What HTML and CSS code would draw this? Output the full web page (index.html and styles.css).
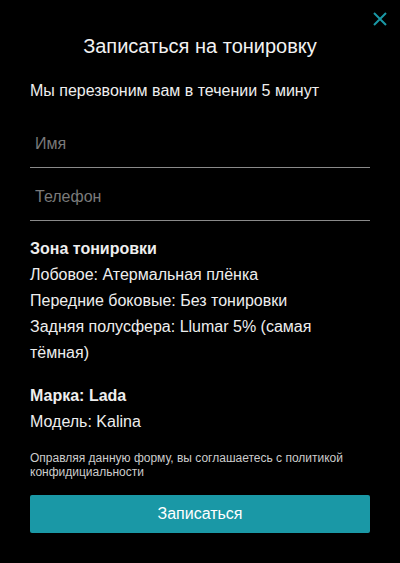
FILE: index.html
```
<!DOCTYPE html>
<html lang="ru">
<head>
<meta charset="utf-8">
<link rel="stylesheet" href="styles.css">
</head>
<body>
<div class="modal">
  <button class="close" aria-label="Закрыть">
    <svg width="14" height="14" viewBox="0 0 14 14"><path d="M1 1 L13 13 M13 1 L1 13" stroke="#1a98a6" stroke-width="2" fill="none"/></svg>
  </button>
  <h1 class="title">Записаться на тонировку</h1>
  <p class="subtitle">Мы перезвоним вам в течении 5 минут</p>
  <form class="form">
    <input class="field" type="text" placeholder="Имя">
    <input class="field" type="tel" placeholder="Телефон">
    <div class="info">
      <div class="bold">Зона тонировки</div>
      <div>Лобовое: Атермальная плёнка</div>
      <div>Передние боковые: Без тонировки</div>
      <div>Задняя полусфера: Llumar 5% (самая тёмная)</div>
    </div>
    <div class="info car">
      <div class="bold">Марка: Lada</div>
      <div>Модель: Kalina</div>
    </div>
    <p class="policy">Оправляя данную форму, вы соглашаетесь с политикой конфидициальности</p>
    <button class="submit" type="button">Записаться</button>
  </form>
</div>
</body>
</html>
```
FILE: styles.css
```
html, body {
  margin: 0;
  padding: 0;
  background: #000;
}
body {
  font-family: "Liberation Sans", Arial, sans-serif;
  color: #eeeeee;
}
.modal {
  position: relative;
  padding: 34px 30px 0 30px;
}
.close {
  position: absolute;
  top: 12px;
  left: 373px;
  width: 14px;
  height: 14px;
  padding: 0;
  border: 0;
  background: none;
  display: block;
}
.close svg {
  display: block;
}
.title {
  margin: 0;
  font-size: 20px;
  line-height: 24px;
  font-weight: normal;
  text-align: center;
  color: #f2f2f2;
}
.subtitle {
  margin: 23px 0 0 0;
  font-size: 16px;
  line-height: 20px;
}
.form {
  display: flex;
  flex-direction: column;
  margin-top: 14px;
}
.field {
  box-sizing: border-box;
  height: 53px;
  width: 100%;
  margin: 0;
  padding: 6px 5px 0 5px;
  border: 0;
  border-bottom: 1px solid #8a8a8a;
  background: transparent;
  font-family: "Liberation Sans", Arial, sans-serif;
  font-size: 16px;
  color: #eee;
  outline: none;
}
.field::placeholder {
  color: #7a7a7a;
}
.info {
  margin-top: 15px;
  font-size: 16px;
  line-height: 26px;
}
.info.car {
  margin-top: 17px;
}
.bold {
  font-weight: bold;
}
.policy {
  margin: 16px 0 0 0;
  font-size: 12px;
  line-height: 14px;
  color: #cccccc;
}
.submit {
  margin-top: 16px;
  height: 38px;
  width: 100%;
  border: 0;
  border-radius: 2px;
  background: #1a98a6;
  color: #fff;
  font-family: "Liberation Sans", Arial, sans-serif;
  font-size: 16px;
  padding: 0;
}
```
